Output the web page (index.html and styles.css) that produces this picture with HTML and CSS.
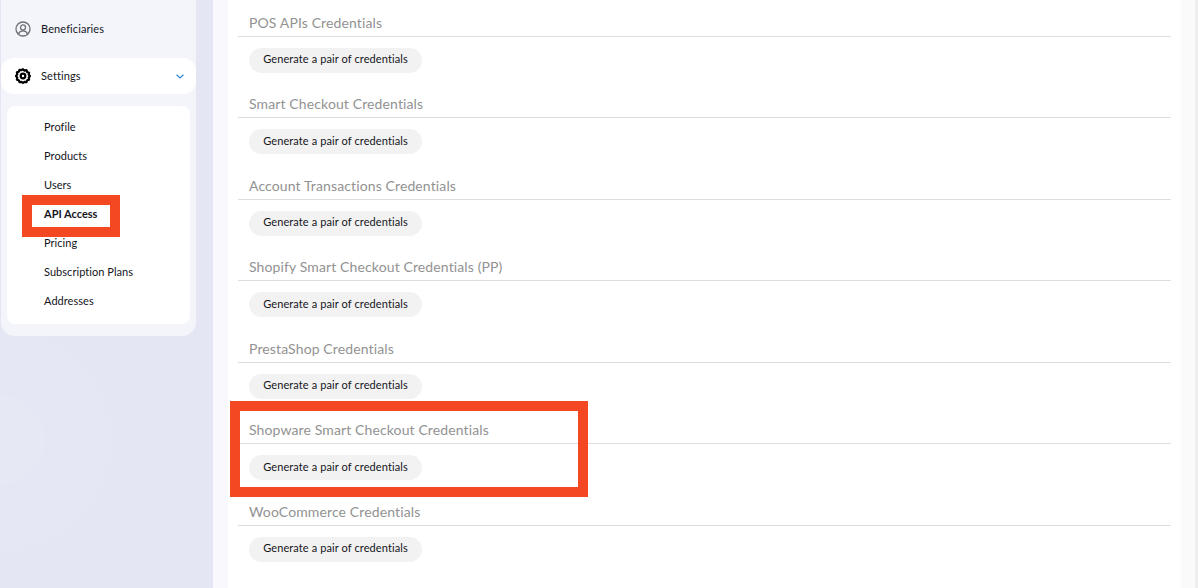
FILE: index.html
```html
<!DOCTYPE html>
<html lang="en">

<head>
  <meta charset="UTF-8">
  <meta name="viewport" content="width=device-width, initial-scale=1.0">
  <title>API Access</title>
  <link rel="stylesheet" href="styles.css">
</head>

<body>

  <div class="page">
    <aside class="sidebar">
      <div class="sideCard">
        <div class="navRow">
          <svg class="navIcon" viewBox="0 0 16 16" fill="none" stroke="#6e7077" stroke-width="1.3">
            <circle cx="8" cy="8" r="7"/>
            <circle cx="8" cy="6.4" r="2.5"/>
            <path d="M3.4 13c.7-2 2.500-3.100 4.600-3.100s3.900 1.100 4.600 3.100"/>
          </svg>
          <span>Beneficiaries</span>
        </div>
        <div class="navRow navRowActive">
          <svg class="navIcon" viewBox="0 0 16 16" fill="none" stroke="#000" stroke-width="2.2">
            <path stroke-linejoin="round" d="M8 1.200l1.500 1.400 2-.4.700 1.900 1.900.7-.4 2L15 8l-1.300 1.600.4 2-1.900.7-.7 1.900-2-.4L8 14.800l-1.500-1-2 .4-.7-1.900-1.900-.7.4-2L1 8l1.300-1.600-.4-2 1.900-.7.7-1.900 2 .4z"/>
            <circle cx="8" cy="8" r="2.300"/>
          </svg>
          <span>Settings</span>
          <svg class="chevron" viewBox="0 0 8 5" fill="none" stroke="#2b86d6" stroke-width="1.200">
            <path d="M.6.700L4 4l3.400-3.300"/>
          </svg>
        </div>
        <div class="subMenu">
          <a class="subItem">Profile</a>
          <a class="subItem">Products</a>
          <a class="subItem">Users</a>
          <a class="subItem subItemActive">API Access</a>
          <a class="subItem">Pricing</a>
          <a class="subItem">Subscription Plans</a>
          <a class="subItem">Addresses</a>
        </div>
      </div>
    </aside>

    <main class="content">
      <section class="credBlock">
        <h3>POS APIs Credentials</h3>
        <button class="genBtn">Generate a pair of credentials</button>
      </section>
      <section class="credBlock">
        <h3>Smart Checkout Credentials</h3>
        <button class="genBtn">Generate a pair of credentials</button>
      </section>
      <section class="credBlock">
        <h3>Account Transactions Credentials</h3>
        <button class="genBtn">Generate a pair of credentials</button>
      </section>
      <section class="credBlock">
        <h3>Shopify Smart Checkout Credentials (PP)</h3>
        <button class="genBtn">Generate a pair of credentials</button>
      </section>
      <section class="credBlock">
        <h3>PrestaShop Credentials</h3>
        <button class="genBtn">Generate a pair of credentials</button>
      </section>
      <section class="credBlock">
        <h3>Shopware Smart Checkout Credentials</h3>
        <button class="genBtn">Generate a pair of credentials</button>
      </section>
      <section class="credBlock">
        <h3>WooCommerce Credentials</h3>
        <button class="genBtn">Generate a pair of credentials</button>
      </section>
    </main>

    <div class="scrollStrip"></div>
  </div>

  <!-- red annotation boxes drawn on top of the screenshot -->
  <div class="markBox markMenu"></div>
  <div class="markBox markShopware"></div>

</body>

</html>
```

FILE: styles.css
```css
* {
  box-sizing: border-box;
}

body {
  margin: 0;
  height: 100vh;
  overflow: hidden;
  font-family: Lato, "Open Sans", sans-serif;
  color: #14151b;
}

.page {
  display: flex;
  height: 100vh;
}

.sidebar {
  width: 213px;
  flex-shrink: 0;
  padding-left: 1px;
  background-color: #e4e7f3;
  background-image: radial-gradient(circle at 0 440px, #e6e9f4 0, #e6e9f4 45px, #e5e8f4 45px, #e5e8f4 85px, #e4e7f3 135px);
}

.sideCard {
  width: 195px;
  padding: 11px 0 12px;
  background: #f4f5fb;
  border-radius: 0 0 14px 14px;
}

.navRow {
  display: flex;
  align-items: center;
  height: 36px;
  padding: 0 12px 0 14px;
  font-size: 11px;
  letter-spacing: 0.1px;
}

.navRow span {
  padding-bottom: 2px;
}

.navRowActive {
  margin-top: 11px;
  background: #fff;
  border-radius: 13px;
}

.navIcon {
  width: 16px;
  height: 16px;
  margin-right: 10px;
  flex-shrink: 0;
}

.chevron {
  width: 8px;
  height: 5px;
  margin-left: auto;
}

.subMenu {
  display: flex;
  flex-direction: column;
  width: 183px;
  margin: 12px 0 0 6px;
  padding: 7px 0 8px;
  background: #fff;
  border-radius: 8px;
}

.subItem {
  height: 29px;
  line-height: 27px;
  padding-left: 37px;
  font-size: 11px;
  letter-spacing: 0.05px;
}

.subItemActive {
  font-weight: 700;
  letter-spacing: 0;
}

.content {
  width: 953px;
  margin-left: 15px;
  padding: 0 10px;
  background: #fff;
  box-shadow: -15px 0 0 #f9f9fd;
  flex-shrink: 0;
}

.credBlock {
  height: 81.5px;
}

.credBlock h3 {
  margin: 0;
  height: 36.75px;
  padding: 13.75px 0 0 11px;
  border-bottom: 1px solid #dedede;
  font-size: 14px;
  line-height: 18px;
  font-weight: 400;
  letter-spacing: 0.12px;
  color: #929292;
}

.genBtn {
  display: block;
  width: 173px;
  height: 25px;
  margin: 11px 0 0 11px;
  padding: 0 0 3px;
  border: 0;
  border-radius: 13px;
  background: #f2f2f2;
  font-family: inherit;
  font-size: 11px;
  letter-spacing: 0.1px;
  color: #14151b;
}

.scrollStrip {
  flex: 1;
  background: #fafafa;
  border-right: 3px solid #eeeeee;
}

.markBox {
  position: absolute;
  border: 10px solid #f34822;
}

.markMenu {
  left: 22px;
  top: 195px;
  width: 98px;
  height: 42px;
}

.markShopware {
  left: 230px;
  top: 401px;
  width: 358px;
  height: 96px;
}
```
